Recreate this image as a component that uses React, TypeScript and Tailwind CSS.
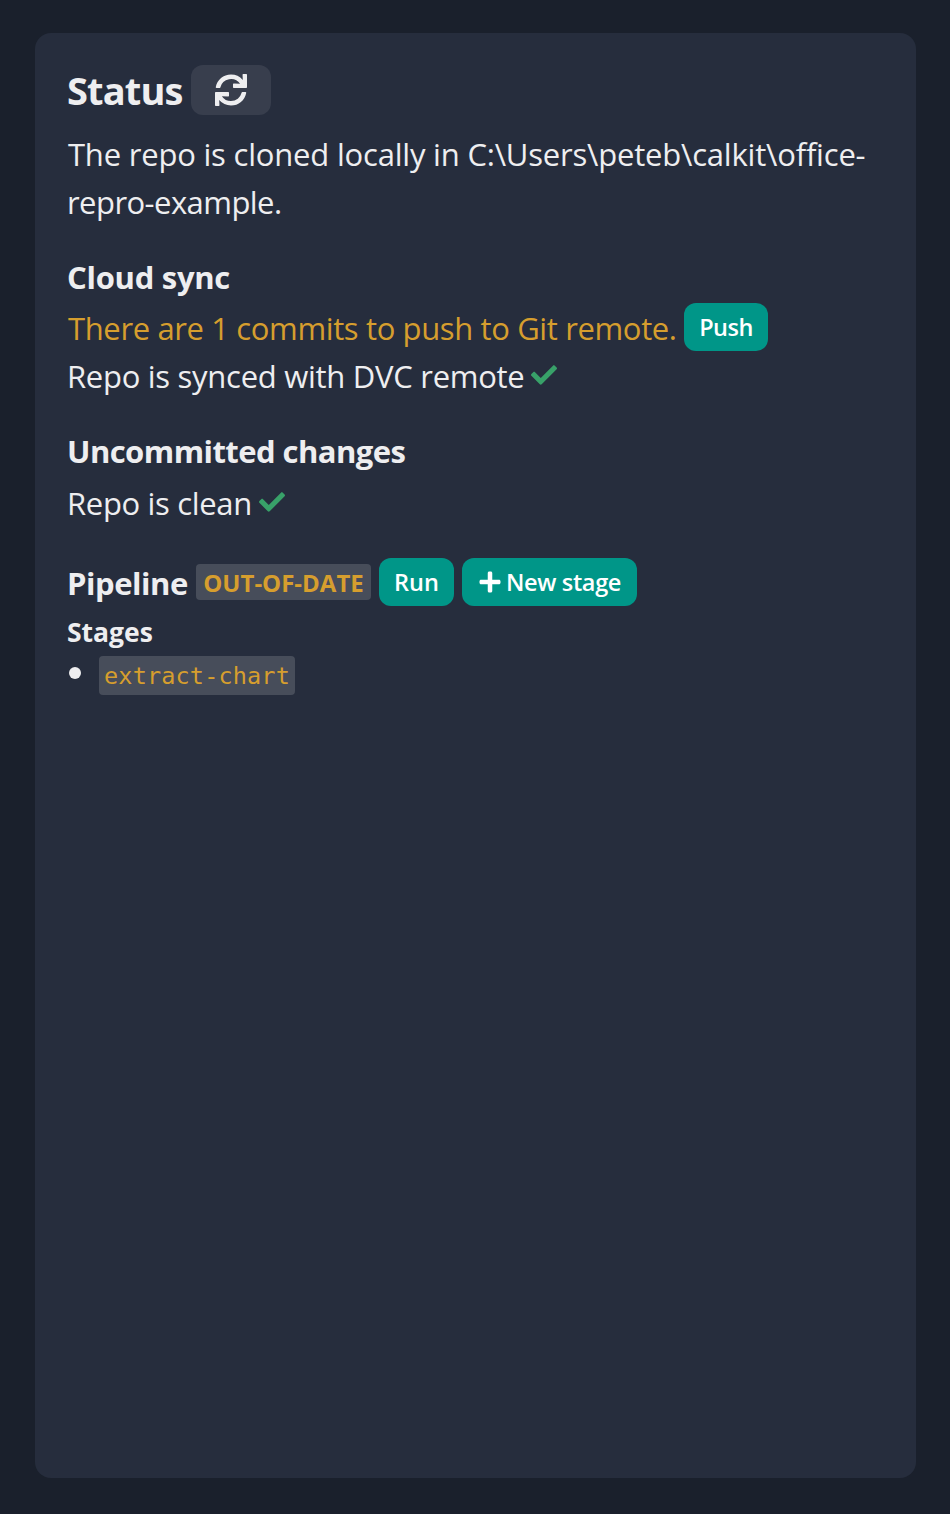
import type { ReactNode } from "react";
import { FaCheck, FaPlus, FaSync } from "react-icons/fa";

const buttonBase =
  "flex h-12 shrink-0 items-center justify-center rounded-xl bg-[#009688] text-[23.5px] leading-none font-semibold text-white";

function SyncedCheck({ className }: { className: string }) {
  return <FaCheck className={`size-[26px] shrink-0 text-[#38a169] ${className}`} />;
}

function Line({ className = "", children }: { className?: string; children: ReactNode }) {
  return (
    <span className={`block text-[31px] leading-[48px] whitespace-nowrap ${className}`}>
      {children}
    </span>
  );
}

export default function App() {
  return (
    <main className="h-[1514px] w-[950px] bg-[#1a202c] pt-[33px] pl-[35px] font-['Open_Sans','Noto_Sans',sans-serif] text-[#eeeef0]">
      <section className="h-[1445px] w-[881px] rounded-2xl bg-[#262d3d] p-8">
        <header className="flex h-[50px] items-center">
          <h1 className="w-[124px] text-[38px] leading-[50px] font-bold tracking-[-0.85px] whitespace-nowrap">
            Status
          </h1>
          <button
            aria-label="Refresh"
            className="flex h-[50px] w-20 items-center justify-center rounded-xl bg-[#383e4d]"
          >
            <FaSync className="size-8" />
          </button>
        </header>

        <p className="mt-[15px]">
          <Line className="pl-px tracking-[-0.2px]">
            {"The repo is cloned locally in C:\\Users\\peteb\\calkit\\office-"}
          </Line>
          <Line className="tracking-[-0.55px]">repro-example.</Line>
        </p>

        <h2 className="mt-[27px] font-bold">
          <Line className="tracking-[-0.28px]">Cloud sync</Line>
        </h2>
        <div className="mt-0.5 flex h-12 items-center">
          <div className="w-[617px] pt-0.5 text-[#d69e2e]">
            <Line className="pl-px tracking-[-0.37px]">There are 1 commits to push to Git remote.</Line>
          </div>
          <button className={`${buttonBase} w-[84px] pt-0.5 tracking-[-0.5px]`}>Push</button>
        </div>
        <div className="mt-px flex h-12 items-center">
          <Line className="w-[464px] tracking-[-0.28px]">Repo is synced with DVC remote</Line>
          <SyncedCheck className="-mt-0.5" />
        </div>

        <h2 className="mt-[27px] font-bold">
          <Line className="tracking-[-0.55px]">Uncommitted changes</Line>
        </h2>
        <div className="mt-1 flex h-12 items-center">
          <Line className="w-[192px] tracking-[-0.33px]">Repo is clean</Line>
          <SyncedCheck className="-mt-0.5" />
        </div>

        <div className="mt-[31px] flex h-12 items-center">
          <h2 className="w-[129px] pt-0.5 font-bold">
            <Line className="tracking-[-0.45px]">Pipeline</Line>
          </h2>
          <span className="flex h-9 w-[175px] items-center justify-center rounded bg-[#474d5a] pt-0.5 text-[24px] leading-none font-bold text-[#d69e2e]">
            OUT-OF-DATE
          </span>
          <button className={`${buttonBase} ml-2 w-[75px] pt-0.5`}>Run</button>
          <button className={`${buttonBase} ml-2 w-[175px] gap-1`}>
            <FaPlus className="size-6 shrink-0" />
            <span className="pt-0.5 tracking-[-0.35px] whitespace-nowrap">New stage</span>
          </button>
        </div>

        <h3 className="mt-2 text-[26.5px] leading-9 font-bold">Stages</h3>
        <ul className="mt-1.5">
          <li className="flex h-[39px] items-center">
            <span className="mb-[5px] ml-0.5 size-3 rounded-full bg-current" />
            <code className="ml-[18px] flex h-[39px] w-[196px] items-center justify-center rounded bg-[#474d5a] pt-0.5 font-['DejaVu_Sans_Mono',monospace] text-[23.5px] leading-none tracking-[0.15px] text-[#d69e2e]">
              extract-chart
            </code>
          </li>
        </ul>
      </section>
    </main>
  );
}
